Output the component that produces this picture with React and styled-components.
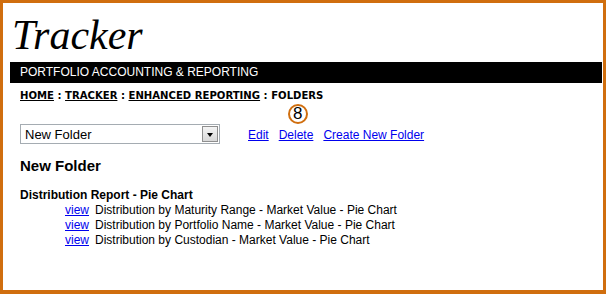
import styled, { createGlobalStyle } from 'styled-components';

const reports = [
  'Distribution by Maturity Range - Market Value - Pie Chart',
  'Distribution by Portfolio Name - Market Value - Pie Chart',
  'Distribution by Custodian - Market Value - Pie Chart',
];

const App = () => {
  return (
    <>
      <GlobalStyle />
      <Frame>
        <Title>Tracker</Title>
        <Banner>PORTFOLIO ACCOUNTING &amp; REPORTING</Banner>
        <Content>
          <Breadcrumb>
            <CrumbLink href="#">HOME</CrumbLink> : <CrumbLink href="#">TRACKER</CrumbLink> :{' '}
            <CrumbLink href="#">ENHANCED REPORTING</CrumbLink> : FOLDERS
          </Breadcrumb>

          <Toolbar>
            <FakeSelect>
              <SelectText>New Folder</SelectText>
              <SelectButton>
                <Arrow />
              </SelectButton>
            </FakeSelect>
            <Actions>
              <ActionLink href="#">Edit</ActionLink>
              <BadgeAnchor>
                <ActionLink href="#">Delete</ActionLink>
                <Badge>8</Badge>
              </BadgeAnchor>
              <ActionLink href="#">Create New Folder</ActionLink>
            </Actions>
          </Toolbar>

          <FolderName>New Folder</FolderName>
          <GroupTitle>Distribution Report - Pie Chart</GroupTitle>
          <ReportList>
            {reports.map((name) => (
              <ReportRow key={name}>
                <ViewLink href="#">view</ViewLink>
                {name}
              </ReportRow>
            ))}
          </ReportList>
        </Content>
      </Frame>
    </>
  );
};

// STYLED COMPONENTS

const GlobalStyle = createGlobalStyle`
  body {
    margin: 0;
    background: #ffffff;
    font-family: "Liberation Sans", Arial, sans-serif;
  }
`;

const Frame = styled.div`
  box-sizing: border-box;
  width: 606px;
  height: 294px;
  border: 3px solid #d06e0e;
  border-bottom-width: 4px;
  padding: 11px 1px 0 7px;
  background: #fff;
`;

const Title = styled.div`
  font-family: "Liberation Serif", "Times New Roman", serif;
  font-style: italic;
  font-size: 42px;
  line-height: 42px;
  color: #000;
  padding-left: 2px;
`;

const Banner = styled.div`
  margin-top: 6px;
  height: 21px;
  line-height: 21px;
  background: #000;
  color: #fff;
  font-size: 12px;
  padding-left: 10px;
`;

const Content = styled.div`
  padding-left: 10px;
`;

const Breadcrumb = styled.div`
  margin-top: 6px;
  font-family: "DejaVu Sans", Verdana, sans-serif;
  font-weight: bold;
  font-size: 10.1px;
  line-height: 13px;
  color: #000;
`;

const CrumbLink = styled.a`
  color: #000;
  text-decoration: underline;
`;

const Toolbar = styled.div`
  margin-top: 22px;
  display: flex;
  align-items: flex-start;
`;

const FakeSelect = styled.div`
  box-sizing: border-box;
  width: 200px;
  height: 20px;
  border: 1px solid #a5acb2;
  display: flex;
  align-items: center;
  justify-content: space-between;
  padding: 0 1px 0 4px;
  background: #fff;
`;

const SelectText = styled.span`
  font-size: 13px;
  color: #000;
`;

const SelectButton = styled.span`
  box-sizing: border-box;
  width: 16px;
  height: 16px;
  border: 1px solid #8f8f8f;
  background: linear-gradient(#f4f4f4, #d8d8d8);
  display: flex;
  align-items: center;
  justify-content: center;
`;

const Arrow = styled.span`
  width: 0;
  height: 0;
  border-left: 3.5px solid transparent;
  border-right: 3.5px solid transparent;
  border-top: 4px solid #000;
  margin-top: 1px;
`;

const Actions = styled.div`
  display: flex;
  gap: 10px;
  margin-left: 28px;
  padding-top: 4px;
  font-size: 12px;
  line-height: 15px;
`;

const ActionLink = styled.a`
  color: #0000ee;
  text-decoration: underline;
`;

const BadgeAnchor = styled.span`
  position: relative;
`;

const Badge = styled.span`
  position: absolute;
  left: 9px;
  top: -24px;
  box-sizing: border-box;
  width: 20px;
  height: 20px;
  border-radius: 50%;
  border: 2px solid #d06e0e;
  background: #fff;
  color: #000;
  font-size: 17px;
  line-height: 16px;
  text-align: center;
`;

const FolderName = styled.div`
  margin-top: 13px;
  font-size: 15px;
  font-weight: bold;
  line-height: 18px;
  color: #000;
`;

const GroupTitle = styled.div`
  margin-top: 13px;
  font-size: 12px;
  font-weight: bold;
  line-height: 15px;
  color: #000;
`;

const ReportList = styled.div`
  padding-left: 45px;
`;

const ReportRow = styled.div`
  font-size: 12px;
  line-height: 15px;
  color: #000;
`;

const ViewLink = styled.a`
  color: #0000ee;
  text-decoration: underline;
  margin-right: 6px;
`;

export default App;
